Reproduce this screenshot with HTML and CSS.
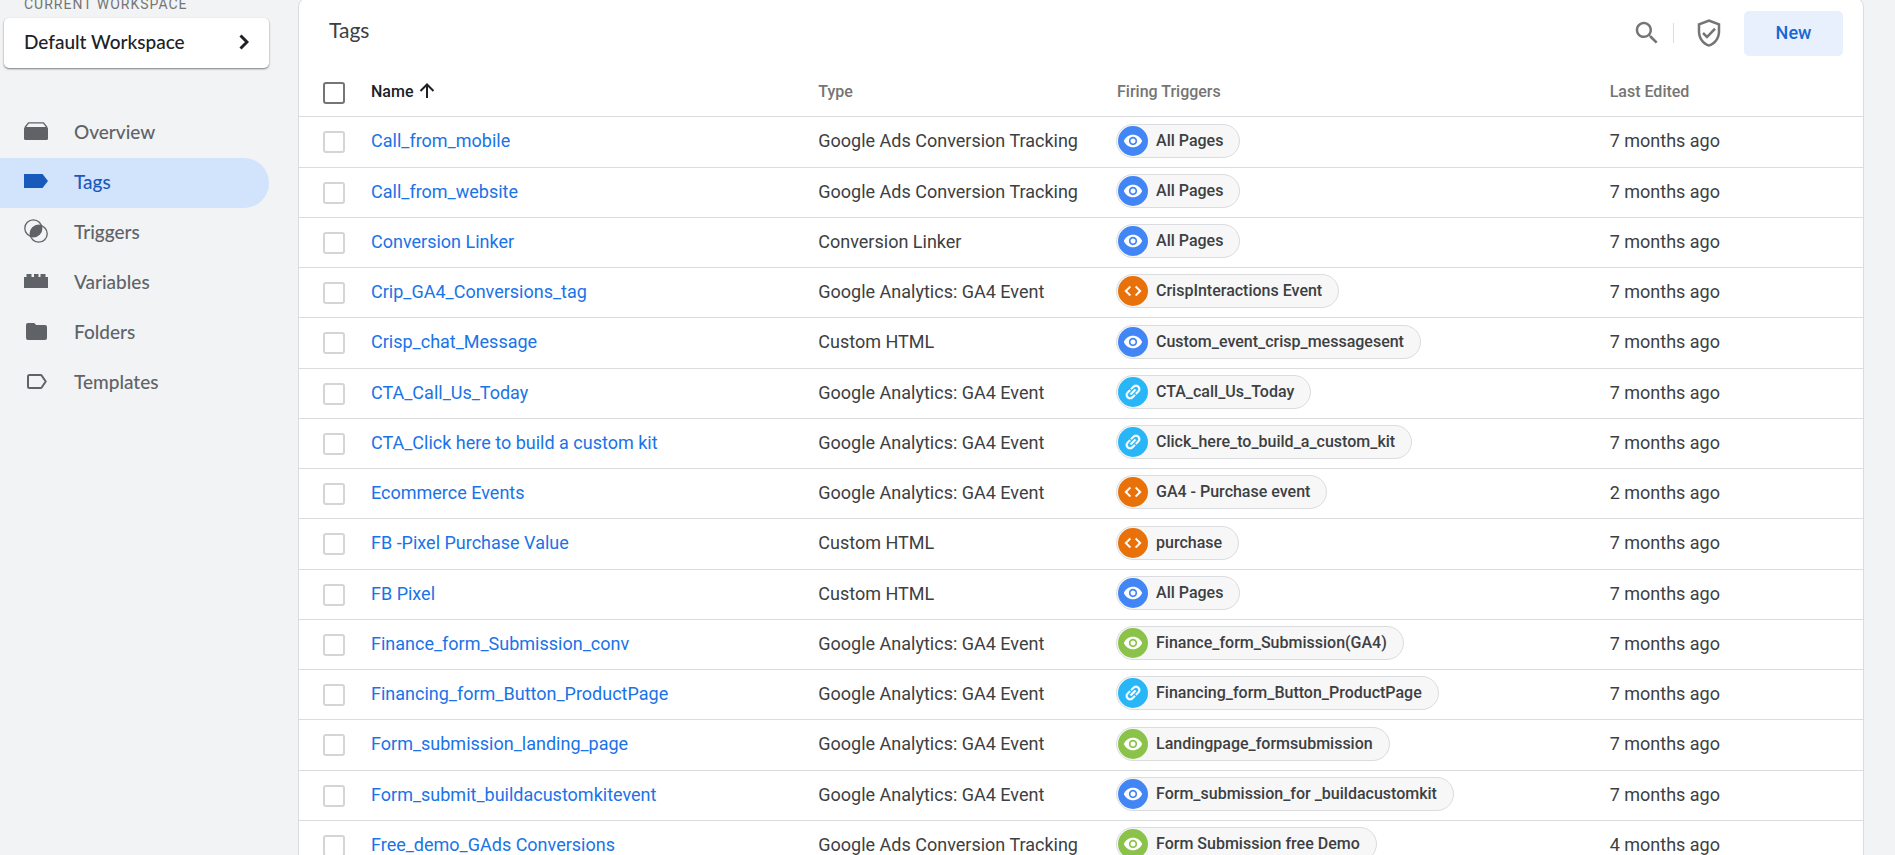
FILE: index.html
```html
<!DOCTYPE html>
<html lang="en">
<head>
<meta charset="utf-8">
<meta name="viewport" content="width=device-width, initial-scale=1">
<title>Tags</title>
<link rel="stylesheet" href="styles.css">
</head>
<body>
<svg class="sprite" aria-hidden="true">
  <symbol id="eye" viewBox="0 0 24 24"><path d="M12 4.5C7 4.5 2.73 7.61 1 12c1.73 4.39 6 7.5 11 7.5s9.27-3.11 11-7.5c-1.73-4.39-6-7.5-11-7.5zM12 17c-2.76 0-5-2.24-5-5s2.24-5 5-5 5 2.24 5 5-2.24 5-5 5zm0-8c-1.66 0-3 1.34-3 3s1.34 3 3 3 3-1.34 3-3-1.34-3-3-3z"/></symbol>
  <symbol id="code" viewBox="0 0 24 24"><path stroke="#fff" stroke-width=".5" d="M9.4 16.6L4.8 12l4.6-4.6L8 6l-6 6 6 6 1.4-1.4zm5.2 0l4.6-4.6-4.6-4.6L16 6l6 6-6 6-1.4-1.4z"/></symbol>
  <symbol id="link" viewBox="0 0 24 24"><path stroke="#fff" stroke-width=".7" transform="rotate(-45 12 12)" d="M3.9 12c0-1.710 1.390-3.100 3.100-3.100h4V7H7c-2.760 0-5 2.240-5 5s2.240 5 5 5h4v-1.900H7c-1.710 0-3.100-1.390-3.100-3.100zM8 13h8v-2H8v2zm9-6h-4v1.900h4c1.710 0 3.100 1.390 3.100 3.100s-1.390 3.100-3.100 3.100h-4V17h4c2.760 0 5-2.240 5-5s-2.240-5-5-5z"/></symbol>
</svg>
<div class="shell">
  <aside class="sidebar">
    <div class="caption">CURRENT WORKSPACE</div>
    <button class="workspace" type="button">
      <span>Default Workspace</span>
      <svg class="chevron" viewBox="0 0 10 16" aria-hidden="true"><path d="M1.500 1.500L8 8l-6.500 6.500"/></svg>
    </button>
    <nav class="nav">
      <a class="nav-item" href="#overview"><svg viewBox="0 0 24 24" aria-hidden="true"><path d="M0 8.500Q0 7 1.500 7h21Q24 7 24 8.500v10q0 1.500-1.500 1.500h-21Q0 20 0 18.500z"/><path class="line" d="M1 7.500L4.500 2.800h15L23 7.500"/></svg>Overview</a>
      <a class="nav-item active" href="#tags" aria-current="page"><svg viewBox="0 0 24 24" aria-hidden="true"><path d="M0 4h18.500l5.500 7-5.500 7H0z"/></svg>Tags</a>
      <a class="nav-item" href="#triggers"><svg viewBox="0 0 24 24" aria-hidden="true"><circle class="line" cx="9.300" cy="8.300" r="8.500"/><circle class="line" cx="14.700" cy="13.700" r="8.500"/><path d="M17.400 5.600A8.500 8.500 0 0 1 6.600 16.400 8.500 8.500 0 0 1 17.400 5.600z"/></svg>Triggers</a>
      <a class="nav-item" href="#variables"><svg viewBox="0 0 24 24" aria-hidden="true"><path d="M0 7h2.500V4H7.500v3h2.500V4h4.500v3h2V4h5v3H24v11H0z"/></svg>Variables</a>
      <a class="nav-item" href="#folders"><svg viewBox="0 0 24 24" aria-hidden="true"><path d="M10.200 3H4a2 2 0 0 0-2 2v13a2 2 0 0 0 2 2h17a2 2 0 0 0 2-2V7a2 2 0 0 0-2-2h-8.800z"/></svg>Folders</a>
      <a class="nav-item" href="#templates"><svg viewBox="0 0 24 24" aria-hidden="true"><path class="outline" d="M5.500 5h11q.8 0 1.300.7l3.900 5.800-3.900 5.800q-.5.700-1.300.7h-11Q4 18 4 16.500v-10Q4 5 5.500 5z"/></svg>Templates</a>
    </nav>
  </aside>
  <main class="card">
    <header class="card-head">
      <h1 class="title">Tags</h1>
      <button class="icon-btn" type="button" aria-label="Search"><svg viewBox="0 0 24 24" aria-hidden="true"><path d="M15.500 14h-.79l-.28-.27C15.410 12.590 16 11.110 16 9.500 16 5.910 13.090 3 9.500 3S3 5.910 3 9.500 5.910 16 9.500 16c1.610 0 3.090-.59 4.230-1.570l.27.28v.79l5 4.990L20.490 19l-4.990-5zm-6 0C7.010 14 5 11.990 5 9.500S7.010 5 9.500 5 14 7.010 14 9.500 11.990 14 9.500 14z"/></svg></button>
      <span class="divider"></span>
      <button class="icon-btn" type="button" aria-label="Approval status"><svg viewBox="0 0 24 24" aria-hidden="true"><path d="M12 1L3 4.400v6.600c0 5.550 3.840 10.740 9 12 5.160-1.260 9-6.450 9-12V4.400L12 1zm7 10c0 4.520-2.980 8.690-7 9.930-4.020-1.240-7-5.410-7-9.930V5.800l7-2.660 7 2.660V11zM7.910 11.290L6.500 12.700l3.900 3.900 7.100-7.300-1.410-1.420-5.690 5.890z"/></svg></button>
      <button class="new-btn" type="button">New</button>
    </header>
    <table class="grid">
      <thead>
        <tr>
          <th class="col-check"><input class="check check-all" type="checkbox" aria-label="Select all tags"></th>
          <th class="col-name sorted" aria-sort="ascending">Name<svg class="arrow" viewBox="0 0 16 16" aria-hidden="true"><path d="M8 15V2M1.500 8L8 1.500 14.500 8"/></svg></th>
          <th class="col-type">Type</th>
          <th class="col-trigger">Firing Triggers</th>
          <th class="col-edited">Last Edited</th>
        </tr>
      </thead>
      <tbody>
        <tr><td class="select"><input class="check" type="checkbox" aria-label="Call_from_mobile"></td><td><a href="#t1">Call_from_mobile</a></td><td>Google Ads Conversion Tracking</td><td class="trigger"><span class="chip"><span class="dot blue"><svg><use href="#eye"/></svg></span>All Pages</span></td><td>7 months ago</td></tr>
        <tr><td class="select"><input class="check" type="checkbox" aria-label="Call_from_website"></td><td><a href="#t2">Call_from_website</a></td><td>Google Ads Conversion Tracking</td><td class="trigger"><span class="chip"><span class="dot blue"><svg><use href="#eye"/></svg></span>All Pages</span></td><td>7 months ago</td></tr>
        <tr><td class="select"><input class="check" type="checkbox" aria-label="Conversion Linker"></td><td><a href="#t3">Conversion Linker</a></td><td>Conversion Linker</td><td class="trigger"><span class="chip"><span class="dot blue"><svg><use href="#eye"/></svg></span>All Pages</span></td><td>7 months ago</td></tr>
        <tr><td class="select"><input class="check" type="checkbox" aria-label="Crip_GA4_Conversions_tag"></td><td><a href="#t4">Crip_GA4_Conversions_tag</a></td><td>Google Analytics: GA4 Event</td><td class="trigger"><span class="chip"><span class="dot orange"><svg><use href="#code"/></svg></span>CrispInteractions Event</span></td><td>7 months ago</td></tr>
        <tr><td class="select"><input class="check" type="checkbox" aria-label="Crisp_chat_Message"></td><td><a href="#t5">Crisp_chat_Message</a></td><td>Custom HTML</td><td class="trigger"><span class="chip"><span class="dot blue"><svg><use href="#eye"/></svg></span>Custom_event_crisp_messagesent</span></td><td>7 months ago</td></tr>
        <tr><td class="select"><input class="check" type="checkbox" aria-label="CTA_Call_Us_Today"></td><td><a href="#t6">CTA_Call_Us_Today</a></td><td>Google Analytics: GA4 Event</td><td class="trigger"><span class="chip"><span class="dot cyan"><svg><use href="#link"/></svg></span>CTA_call_Us_Today</span></td><td>7 months ago</td></tr>
        <tr><td class="select"><input class="check" type="checkbox" aria-label="CTA_Click here to build a custom kit"></td><td><a href="#t7">CTA_Click here to build a custom kit</a></td><td>Google Analytics: GA4 Event</td><td class="trigger"><span class="chip"><span class="dot cyan"><svg><use href="#link"/></svg></span>Click_here_to_build_a_custom_kit</span></td><td>7 months ago</td></tr>
        <tr><td class="select"><input class="check" type="checkbox" aria-label="Ecommerce Events"></td><td><a href="#t8">Ecommerce Events</a></td><td>Google Analytics: GA4 Event</td><td class="trigger"><span class="chip"><span class="dot orange"><svg><use href="#code"/></svg></span>GA4 - Purchase event</span></td><td>2 months ago</td></tr>
        <tr><td class="select"><input class="check" type="checkbox" aria-label="FB -Pixel Purchase Value"></td><td><a href="#t9">FB -Pixel Purchase Value</a></td><td>Custom HTML</td><td class="trigger"><span class="chip"><span class="dot orange"><svg><use href="#code"/></svg></span>purchase</span></td><td>7 months ago</td></tr>
        <tr><td class="select"><input class="check" type="checkbox" aria-label="FB Pixel"></td><td><a href="#t10">FB Pixel</a></td><td>Custom HTML</td><td class="trigger"><span class="chip"><span class="dot blue"><svg><use href="#eye"/></svg></span>All Pages</span></td><td>7 months ago</td></tr>
        <tr><td class="select"><input class="check" type="checkbox" aria-label="Finance_form_Submission_conv"></td><td><a href="#t11">Finance_form_Submission_conv</a></td><td>Google Analytics: GA4 Event</td><td class="trigger"><span class="chip"><span class="dot green"><svg><use href="#eye"/></svg></span>Finance_form_Submission(GA4)</span></td><td>7 months ago</td></tr>
        <tr><td class="select"><input class="check" type="checkbox" aria-label="Financing_form_Button_ProductPage"></td><td><a href="#t12">Financing_form_Button_ProductPage</a></td><td>Google Analytics: GA4 Event</td><td class="trigger"><span class="chip"><span class="dot cyan"><svg><use href="#link"/></svg></span>Financing_form_Button_ProductPage</span></td><td>7 months ago</td></tr>
        <tr><td class="select"><input class="check" type="checkbox" aria-label="Form_submission_landing_page"></td><td><a href="#t13">Form_submission_landing_page</a></td><td>Google Analytics: GA4 Event</td><td class="trigger"><span class="chip"><span class="dot green"><svg><use href="#eye"/></svg></span>Landingpage_formsubmission</span></td><td>7 months ago</td></tr>
        <tr><td class="select"><input class="check" type="checkbox" aria-label="Form_submit_buildacustomkitevent"></td><td><a href="#t14">Form_submit_buildacustomkitevent</a></td><td>Google Analytics: GA4 Event</td><td class="trigger"><span class="chip"><span class="dot blue"><svg><use href="#eye"/></svg></span>Form_submission_for _buildacustomkit</span></td><td>7 months ago</td></tr>
        <tr><td class="select"><input class="check" type="checkbox" aria-label="Free_demo_GAds Conversions"></td><td><a href="#t15">Free_demo_GAds Conversions</a></td><td>Google Ads Conversion Tracking</td><td class="trigger"><span class="chip"><span class="dot green"><svg><use href="#eye"/></svg></span>Form Submission free Demo</span></td><td>4 months ago</td></tr>
      </tbody>
    </table>
  </main>
</div>
</body>
</html>
```
FILE: styles.css
```css
* { box-sizing: border-box; }

body {
  margin: 0;
  height: 100vh;
  overflow: hidden;
  background: #f1f3f4;
  color: #3c4043;
  font: 400 18px/24px Roboto, "Liberation Sans", sans-serif;
}

button { border: 0; padding: 0; font: inherit; cursor: pointer; }
a { color: #1a73e8; text-decoration: none; }
.sprite { display: none; }

.shell {
  display: flex;
  align-items: flex-start;
  gap: 29px;
  margin-top: -6px;
  padding-right: 31px;
}

/* Sidebar */
.sidebar {
  flex: 0 0 269px;
  font: 500 19px/24px Lato, "Open Sans", sans-serif;
}
.caption {
  padding-left: 24px;
  color: #757575;
  font: 400 14px/20px Roboto, "Liberation Sans", sans-serif;
  letter-spacing: 1px;
}
.workspace {
  display: flex;
  align-items: center;
  justify-content: space-between;
  width: calc(100% - 4px);
  height: 50px;
  margin: 4px 0 40px 4px;
  padding: 0 20px 2px;
  border-radius: 5px;
  background: #fff;
  box-shadow: 0 1px 2px rgba(0, 0, 0, .5);
  color: #202124;
}
.chevron { width: 10px; height: 16px; fill: none; stroke: #202124; stroke-width: 3; }
.nav-item {
  display: flex;
  align-items: center;
  gap: 26px;
  height: 50px;
  padding: 0 0 2px 24px;
  border-radius: 0 25px 25px 0;
  color: #5f6368;
}
.nav-item svg { width: 24px; height: 24px; overflow: visible; fill: currentColor; }
.nav-item .line { fill: none; stroke: currentColor; stroke-width: 1.300; }
.nav-item .outline { fill: none; stroke: currentColor; stroke-width: 2; }
.nav-item.active { background: #d2e3fc; color: #185abc; }

/* Tags card */
.card {
  flex: 1;
  min-width: 0;
  margin-top: 3px;
  border: 1px solid #dadce0;
  border-radius: 10px;
  background: #fff;
}
.card-head {
  display: flex;
  align-items: center;
  height: 70px;
  padding: 0 20px 0 30px;
}
.title {
  flex: 1;
  margin: 0;
  padding-bottom: 6px;
  font: 400 21px/28px Lato, "Open Sans", sans-serif;
}
.icon-btn { width: 30px; height: 30px; background: none; }
.icon-btn svg { display: block; width: 30px; height: 30px; fill: #757575; }
.divider { width: 1px; height: 20px; margin: 0 20px 0 11px; background: #dadce0; }
.new-btn {
  width: 99px;
  height: 45px;
  margin-left: 20px;
  border-radius: 5px;
  background: #e8f0fe;
  color: #1967d2;
  font-weight: 500;
}

.grid { width: 100%; table-layout: fixed; border-collapse: separate; border-spacing: 0; }
.grid th, .grid td {
  padding: 0;
  border-bottom: 1px solid #dadce0;
  text-align: left;
  white-space: nowrap;
}
.grid th { height: 49px; color: #757575; font-size: 16px; font-weight: 500; }
.grid td { height: 50px; padding-bottom: 2px; }
.grid tbody tr:nth-child(4n+1) td { height: 51px; }
.grid .select { padding-bottom: 0; }
.grid .trigger { padding-bottom: 3px; }
.grid .sorted { color: #202124; }
.grid .col-check { width: 72px; padding-top: 2px; }
.col-name { width: 28.6%; }
.col-type { width: 19.1%; }
.col-trigger { width: 31.5%; }
.arrow { width: 16px; height: 16px; margin-left: 6px; vertical-align: -2px; fill: none; stroke: #202124; stroke-width: 2; }

.check {
  display: block;
  appearance: none;
  width: 22px;
  height: 22px;
  margin: 0 0 0 24px;
  border: 2px solid #d5d5d5;
  border-radius: 3px;
  background: #fff;
}
.check-all { border-color: #757575; }

.chip {
  display: inline-flex;
  align-items: center;
  gap: 8px;
  height: 34px;
  margin-left: -1px;
  padding: 0 16px 0 1px;
  border: 1px solid #dadce0;
  border-radius: 17px;
  background: #f7f7f7;
  font-size: 16px;
  font-weight: 500;
  vertical-align: middle;
}
.dot { display: grid; place-items: center; width: 30px; height: 30px; border-radius: 50%; }
.dot svg { width: 20px; height: 20px; fill: #fff; }
.blue { background: #4285f4; }
.orange { background: #e8710a; }
.cyan { background: #29b6f6; }
.green { background: #8bc34a; }
```
